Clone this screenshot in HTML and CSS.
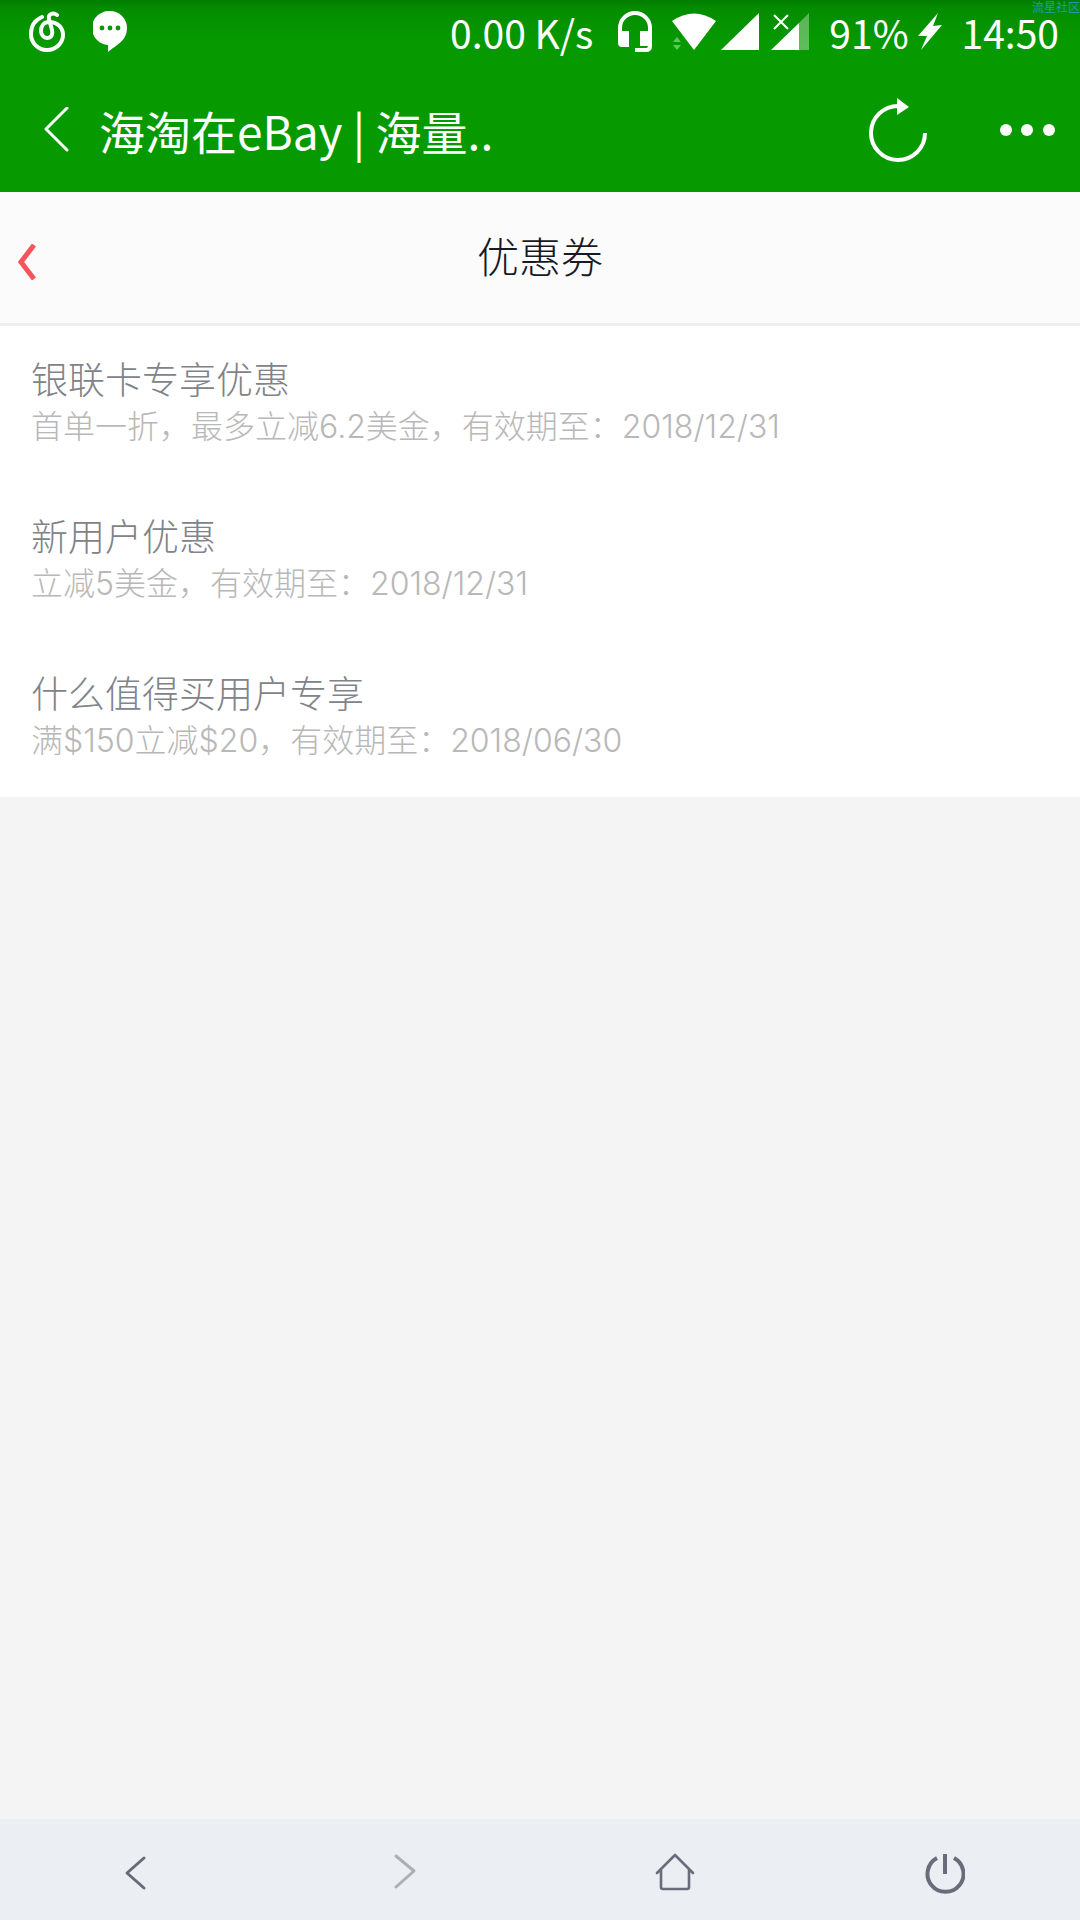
FILE: index.html
```html
<!DOCTYPE html>
<html lang="zh-CN">
<head>
  <meta charset="utf-8">
  <meta name="viewport" content="width=device-width, initial-scale=1">
  <title>优惠券</title>
  <link rel="stylesheet" href="styles.css">
</head>
<body>
  <div class="top">
    <div class="status">
      <svg class="notice" width="36" height="42" viewBox="0 0 36 42" fill="none" stroke="#fff" stroke-width="4" stroke-linecap="round">
        <path d="M13 6C6 9 2 15 2 23c0 9 7 16 16 16s16-7 16-15c0-8-6-13-14-13-5 0-8 4-8 9 0 4 3 7 6 7 4 0 6-3 5-8L20 8c-1-5 4-7 8-4"/>
      </svg>
      <svg class="notice" width="34" height="42" viewBox="0 0 34 42">
        <path fill="#fff" d="M17 0a17 17 0 0 1 17 17c0 13-11 17-19 24v-7A17 17 0 0 1 17 0z"/>
        <g fill="#069a00"><circle cx="9" cy="17" r="2.4"/><circle cx="17" cy="17" r="2.4"/><circle cx="25" cy="17" r="2.4"/></g>
      </svg>
      <span class="speed">0.00 K/s</span>
      <svg class="headset" width="36" height="42" viewBox="0 0 36 42">
        <path d="M3 31V17a15 15 0 0 1 30 0v18q0 4-4 4H18" fill="none" stroke="#fff" stroke-width="4"/>
        <path d="M1 20h11v16H5q-4 0-4-4zM23 20h12v15H23z" fill="#fff"/>
      </svg>
      <svg class="wifi" width="46" height="38" viewBox="0 0 46 38">
        <path d="M1 8q22-15 44 0L23 37z" fill="#fff"/>
        <path d="M2 29l4-5 4 5zM2 32h8l-4 5z" fill="#fff" opacity=".4"/>
      </svg>
      <svg class="signal" width="38" height="38" viewBox="0 0 38 38"><path d="M38 0v37H0z" fill="#fff"/></svg>
      <svg width="38" height="38" viewBox="0 0 38 38">
        <path d="M38 0v37H28V10z" fill="#fff" opacity=".35"/>
        <path d="M28 10v27H0z" fill="#fff"/>
        <path d="M3 2l14 14M17 2L3 16" stroke="#fff" stroke-width="2"/>
      </svg>
      <span class="battery">91%</span>
      <svg width="24" height="38" viewBox="0 0 24 38"><path d="M20 0L0 23l9 0L3 37l21-25-9 1z" fill="#fff"/></svg>
      <span class="clock">14:50</span>
    </div>
    <div class="bar">
      <button class="icon" aria-label="返回">
        <svg width="26" height="46" viewBox="0 0 26 46" fill="none" stroke="#fff" stroke-width="3" stroke-linecap="round" stroke-linejoin="round"><path d="M24 1L3 22l21 21"/></svg>
      </button>
      <span class="site">海淘在eBay | 海量..</span>
      <button class="icon refresh" aria-label="刷新">
        <svg width="58" height="64" viewBox="0 0 58 64"><path d="M30 8A27 27 0 1 0 56 35" fill="none" stroke="#fff" stroke-width="4"/><path d="M28 0l12 9-12 8z" fill="#fff"/></svg>
      </button>
      <button class="icon" aria-label="更多">
        <svg width="56" height="14" viewBox="0 0 56 14" fill="#fff"><circle cx="6" cy="7" r="6"/><circle cx="27" cy="7" r="6"/><circle cx="49" cy="7" r="6"/></svg>
      </button>
    </div>
    <span class="mark">流星社区</span>
  </div>
  <header class="head">
    <button class="icon" aria-label="返回上一页">
      <svg width="20" height="36" viewBox="0 0 20 36" fill="none" stroke="#f4555b" stroke-width="5"><path d="M18 1L5 18l13 17"/></svg>
    </button>
    <h1 class="heading">优惠券</h1>
  </header>
  <main class="content">
    <ul class="coupons">
      <li class="coupon"><h2 class="name">银联卡专享优惠</h2><p class="terms">首单一折，最多立减6.2美金，有效期至：2018/12/31</p></li>
      <li class="coupon"><h2 class="name">新用户优惠</h2><p class="terms">立减5美金，有效期至：2018/12/31</p></li>
      <li class="coupon"><h2 class="name">什么值得买用户专享</h2><p class="terms">满$150立减$20，有效期至：2018/06/30</p></li>
    </ul>
  </main>
  <nav class="tools">
    <button class="icon" aria-label="后退">
      <svg width="40" height="44" viewBox="0 0 40 44" fill="none" stroke="#666a75" stroke-width="3" stroke-linecap="round" stroke-linejoin="round"><path d="M29 8L12 23l17 15"/></svg>
    </button>
    <button class="icon" aria-label="前进">
      <svg width="40" height="44" viewBox="0 0 40 44" fill="none" stroke="#abb0b5" stroke-width="3" stroke-linecap="round" stroke-linejoin="round"><path d="M11 6l18 15-18 16"/></svg>
    </button>
    <button class="icon" aria-label="主页">
      <svg width="40" height="44" viewBox="0 0 40 44" fill="none" stroke="#696d7b" stroke-width="2.6" stroke-linecap="round" stroke-linejoin="round"><path d="M2 23L20 5l18 18M6 20v17q0 2 2 2h24q2 0 2-2V20"/></svg>
    </button>
    <button class="icon" aria-label="退出">
      <svg width="40" height="44" viewBox="0 0 40 44" fill="none" stroke="#696d7b" stroke-width="4"><path d="M12 8a18 18 0 1 0 17 0M20 4v20"/></svg>
    </button>
  </nav>
</body>
</html>
```
FILE: styles.css
```css
* {
  box-sizing: border-box;
  margin: 0;
  padding: 0;
}

body {
  display: flex;
  flex-direction: column;
  min-height: 100vh;
  background: #f4f4f4;
  font-family: "Noto Sans CJK SC", sans-serif;
}

svg {
  display: block;
  flex: none;
}

.icon {
  display: flex;
  border: 0;
  background: none;
}

.top {
  position: relative;
  background: linear-gradient(#007c00, #058c00 8px, #069a00 44px);
  color: #fff;
}

.status {
  display: flex;
  align-items: center;
  height: 64px;
  padding: 0 21px 0 29px;
  font-size: 39px;
  line-height: 38px;
}

.notice {
  margin-right: 28px;
}

.speed {
  margin-left: auto;
}

.headset {
  margin: 0 18px 0 24px;
}

.signal {
  margin: 0 12px 0 4px;
}

.battery {
  margin: 0 9px 0 20px;
}

.clock {
  margin-left: 20px;
}

.bar {
  display: flex;
  align-items: center;
  height: 128px;
  padding: 4px 24px 0 43px;
}

.site {
  margin-left: 30px;
  font-size: 46px;
  line-height: 64px;
}

.refresh {
  margin: 0 73px 0 auto;
}

.mark {
  position: absolute;
  top: 0;
  right: 0;
  color: #2299b4;
  font-size: 12px;
  line-height: 14px;
}

.head {
  display: grid;
  grid-template-columns: 40px 1fr 40px;
  align-items: center;
  height: 134px;
  padding: 8px 16px 0;
  border-bottom: 3px solid #eee;
  background: #fbfbfb;
}

.heading {
  padding-bottom: 14px;
  color: #171923;
  font-size: 42px;
  font-weight: 300;
  line-height: 64px;
  text-align: center;
}

.content {
  flex: 1;
}

.coupons {
  background: #fff;
  list-style: none;
}

.coupon {
  padding: 28px 31px 31px;
}

.name {
  color: #808388;
  font-size: 37px;
  font-weight: 300;
  line-height: 48px;
}

.terms {
  color: #b8b8b8;
  font-family: Inter, "Noto Sans CJK SC", sans-serif;
  font-size: 32px;
  font-weight: 300;
  line-height: 50px;
}

.tools {
  display: grid;
  grid-template-columns: repeat(4, 1fr);
  place-items: center;
  height: 101px;
  padding-top: 4px;
  background: #ebeff3;
}
```
